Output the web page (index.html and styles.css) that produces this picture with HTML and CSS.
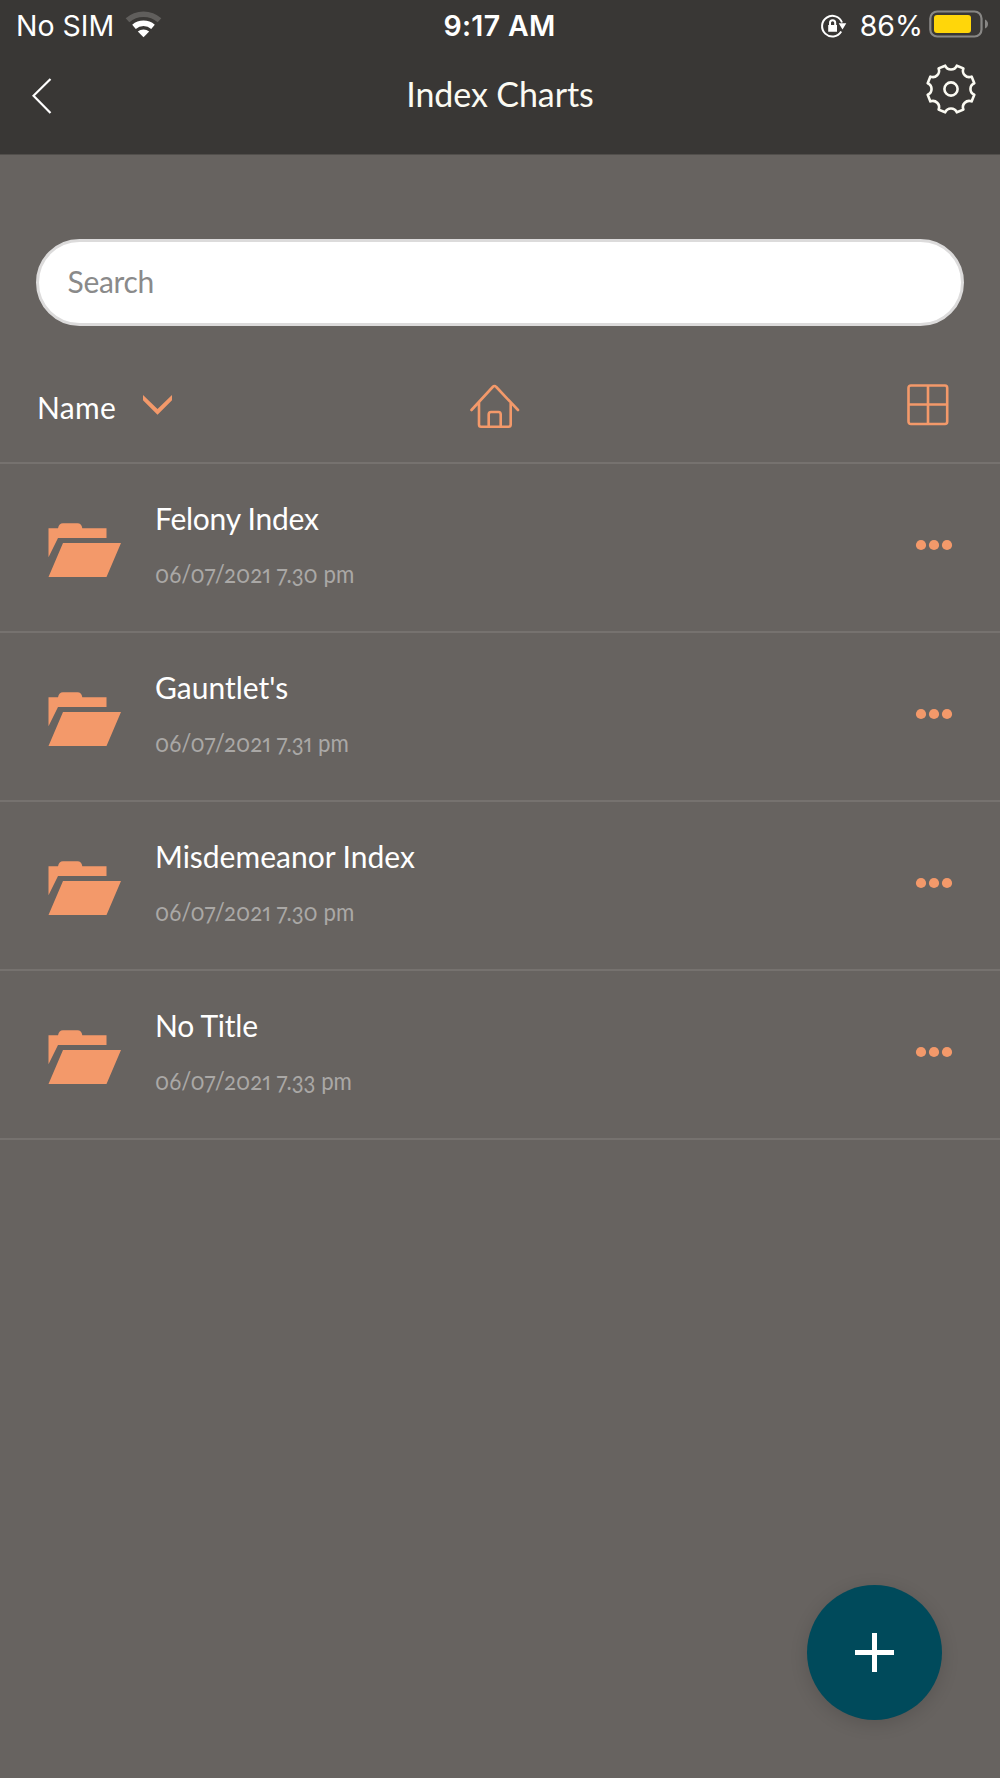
FILE: index.html
```html
<!DOCTYPE html>
<html lang="en">
<head>
<meta charset="utf-8">
<title>Index Charts</title>
<link rel="stylesheet" href="styles.css">
</head>
<body>
<svg class="defs" width="0" height="0" aria-hidden="true">
  <symbol id="folder" viewBox="0 0 74 56">
    <path d="M.5 5.2H10Q11 .3 15 .3H29.500Q33.500 .3 34.300 5.200H58.500V15H10L.5 34.200ZM15 20H73L58.500 54H.5Z"/>
  </symbol>
  <symbol id="more" viewBox="0 0 38 12">
    <circle cx="6" cy="6" r="5.100"/><circle cx="19" cy="6" r="5.100"/><circle cx="32" cy="6" r="5.100"/>
  </symbol>
</svg>
<div class="app">
  <header class="header">
    <div class="status">
      <div class="status-left">
        <span class="carrier">No SIM</span>
        <svg class="wifi" width="38" height="28" viewBox="0 0 38 28">
          <path class="wifi-off" d="M2.500 10.300A24 24 0 0 1 34.500 10.300"/>
          <path class="wifi-on" d="M9 16.800A14.500 14.500 0 0 1 28 16.800"/>
          <path class="wifi-dot" d="M18.500 27.300L12.800 21.600A9 9 0 0 1 24.200 21.600Z"/>
        </svg>
      </div>
      <span class="time">9:17 AM</span>
      <div class="status-right">
        <svg class="lock" width="28" height="26" viewBox="0 0 28 26">
          <path class="ring" d="M22 9.500A10.300 10.300 0 1 0 21.200 18.500"/>
          <path class="solid" d="M18.700 10.300H26.300L22.500 16.500ZM8.200 12H17V18.700H8.200Z"/>
          <path class="shackle" d="M10 12V9.800A2.600 2.600 0 0 1 15.200 9.800V12"/>
        </svg>
        <span class="percent">86%</span>
        <svg class="battery" width="60" height="28" viewBox="0 0 60 28">
          <rect class="case" x="1.300" y="1.500" width="51.200" height="25" rx="7"/>
          <rect class="charge" x="5" y="5" width="37" height="18" rx="3"/>
          <path class="nub" d="M56 9.500Q59 11 59 14T56 18.500Z"/>
        </svg>
      </div>
    </div>
    <div class="navbar">
      <svg class="back" width="20" height="36" viewBox="0 0 20 36"><path d="M18.500 1L1.500 17.800L18.500 35"/></svg>
      <h1 class="title">Index Charts</h1>
      <svg class="gear" width="52" height="52" viewBox="-26 -26 52 52">
        <path d="M-5.800 -23.300A6.300 6.300 0 0 0 5.800 -23.300L12.400 -20.600A6.300 6.300 0 0 0 20.600 -12.400L23.300 -5.800A6.300 6.300 0 0 0 23.300 5.800L20.600 12.400A6.300 6.300 0 0 0 12.400 20.600L5.800 23.300A6.300 6.300 0 0 0 -5.800 23.300L-12.400 20.600A6.300 6.300 0 0 0 -20.600 12.400L-23.300 5.800A6.300 6.300 0 0 0 -23.300 -5.800L-20.600 -12.400A6.300 6.300 0 0 0 -12.400 -20.600Z"/>
        <circle r="6.600"/>
      </svg>
    </div>
  </header>
  <main class="content">
    <input class="search" type="text" placeholder="Search" aria-label="Search">
    <div class="toolbar">
      <div class="sort">
        <span class="sort-label">Name</span>
        <svg class="chevron" width="29" height="20" viewBox="0 0 29 20"><path d="M0 0L14.500 14L29 0V5.300L14.500 19.800L0 5.300Z"/></svg>
      </div>
      <svg class="outline" width="50" height="46" viewBox="0 0 50 46">
        <path d="M1.500 26L22.700 3Q24.500 1 26.300 3L48 26M9 18.500V40.500Q9 42.700 11 42.700H38.500Q40.700 42.700 40.700 40.500V18.500M18.700 42V30.500Q18.700 28 21 28H28.500Q30.700 28 30.700 30.500V42"/>
      </svg>
      <svg class="outline" width="42" height="42" viewBox="0 0 42 42">
        <path d="M4 1.500H38Q40.200 1.500 40.200 4V37.500Q40.200 40 38 40H4Q1.500 40 1.500 37.500V4Q1.500 1.500 4 1.500ZM21 1.500V40M1.500 20.500H40"/>
      </svg>
    </div>
    <ul class="list">
      <li class="row">
        <svg class="folder" width="74" height="56"><use href="#folder"/></svg>
        <div class="info"><span class="name tight">Felony Index</span><span class="date">06/07/2021 7.30 pm</span></div>
        <svg class="more" width="38" height="12"><use href="#more"/></svg>
      </li>
      <li class="row">
        <svg class="folder" width="74" height="56"><use href="#folder"/></svg>
        <div class="info"><span class="name">Gauntlet's</span><span class="date">06/07/2021 7.31 pm</span></div>
        <svg class="more" width="38" height="12"><use href="#more"/></svg>
      </li>
      <li class="row">
        <svg class="folder" width="74" height="56"><use href="#folder"/></svg>
        <div class="info"><span class="name">Misdemeanor Index</span><span class="date">06/07/2021 7.30 pm</span></div>
        <svg class="more" width="38" height="12"><use href="#more"/></svg>
      </li>
      <li class="row">
        <svg class="folder" width="74" height="56"><use href="#folder"/></svg>
        <div class="info"><span class="name tight">No Title</span><span class="date">06/07/2021 7.33 pm</span></div>
        <svg class="more" width="38" height="12"><use href="#more"/></svg>
      </li>
    </ul>
  </main>
  <button class="fab" aria-label="Add">
    <svg width="39" height="39" viewBox="0 0 39 39"><path d="M17 0H22V17H39V22H22V39H17V22H0V17H17Z"/></svg>
  </button>
</div>
</body>
</html>
```
FILE: styles.css
```css
* { box-sizing: border-box; }
body {
  margin: 0;
  background: #676360;
  color: #fff;
  font-family: Lato, "Open Sans", sans-serif;
}
svg { display: block; flex: none; }
.defs { position: absolute; }
.app { position: relative; height: 1778px; overflow: hidden; }

.header { height: 155px; background: #393735; border-bottom: 1px solid #514e4b; }
.status {
  display: grid;
  grid-template-columns: 1fr auto 1fr;
  height: 51px;
  padding: 0 11px 0 10px;
  align-items: center;
  font: 400 28.500px/51px Inter, sans-serif;
}
.status-left, .status-right { display: flex; align-items: center; }
.status-left { gap: 10.500px; padding-left: 6px; }
.status-right { justify-content: flex-end; }
.time { font-weight: 600; letter-spacing: .3px; }
.wifi { margin-top: -3px; }
.wifi-off, .wifi-on { fill: none; stroke: #fff; stroke-width: 5.500; }
.wifi-off { stroke: #605e5c; }
.wifi-dot { fill: #fff; }
.lock { margin-right: 12px; }
.ring, .shackle { fill: none; stroke: #fff; stroke-width: 2; }
.solid { fill: #fff; }
.percent { margin-right: 6px; }
.battery { margin-top: -3px; }
.case { fill: none; stroke: #888785; stroke-width: 2.200; }
.charge { fill: #ffd60a; }
.nub { fill: #888785; }

.navbar {
  display: grid;
  grid-template-columns: 80px 1fr 80px;
  align-items: start;
}
.back { margin: 27px 0 0 32px; fill: none; stroke: #fff; stroke-width: 2.200; }
.title {
  margin: 21px 0 0;
  text-align: center;
  font-weight: 400;
  font-size: 34px;
  line-height: 44px;
  letter-spacing: -.1px;
  color: #fbfaf2;
}
.gear { margin: 12px 0 0 4.500px; fill: none; stroke: #fbfaf2; stroke-width: 2.600; stroke-linejoin: round; }

.content { padding-top: 84px; }
.search {
  display: block;
  width: 928px;
  height: 87px;
  margin: 0 36px 1px;
  padding: 0 28.500px 3px;
  border: 3px solid #dcdbdb;
  border-radius: 44px;
  background: #fff;
  font: 400 30px Lato, sans-serif;
  letter-spacing: -.3px;
}
.search::placeholder { color: #8a8a8a; opacity: 1; }
.toolbar {
  display: grid;
  grid-template-columns: 433px 1fr auto;
  height: 137px;
  padding: 56.500px 51px 0 37px;
  border-bottom: 2px solid #76726f;
}
.sort { display: flex; }
.sort-label { width: 106px; margin-top: -1px; font-size: 30px; line-height: 48px; letter-spacing: .3px; }
.chevron { margin-top: 11.500px; fill: #f3996a; }
.outline { fill: none; stroke: #f3996a; stroke-width: 2.600; stroke-linecap: round; }

.list { margin: 0; padding: 0; list-style: none; }
.row {
  display: grid;
  grid-template-columns: 107px 1fr 38px;
  height: 169px;
  padding: 0 47px 0 48px;
  border-bottom: 2px solid #76726f;
}
.folder { margin-top: 59px; fill: #f3996a; }
.more { margin-top: 74.500px; fill: #f3996a; }
.info { display: flex; flex-direction: column; align-items: flex-start; padding-top: 33px; }
.name { font-size: 30px; line-height: 42px; }
.tight { letter-spacing: -.25px; }
.date {
  margin-top: 12.500px;
  font-size: 25.500px;
  line-height: 42px;
  font-variant-numeric: oldstyle-nums proportional-nums;
  color: #aaa8a6;
  transform: scaleX(.873);
  transform-origin: left;
}
.fab {
  position: absolute;
  left: 806.500px;
  top: 1584.500px;
  display: flex;
  width: 135px;
  height: 135px;
  padding: 0;
  align-items: center;
  justify-content: center;
  border: 0;
  border-radius: 50%;
  background: #004a5b;
  box-shadow: 0 4px 18px rgba(0, 0, 0, .14);
}
.fab svg { fill: #fff; }
```
